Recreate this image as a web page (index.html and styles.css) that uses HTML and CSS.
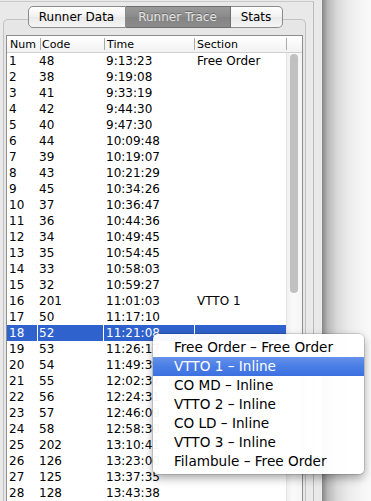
FILE: index.html
```html
<html>
<head>
<meta name="viewport" content="width=device-width, initial-scale=1">
<link rel="stylesheet" href="styles.css">
</head>

<body>
<div class="window">

  <div class="pane">
    <div class="frame">
      <div class="tabbox">

        <!-- Segmented tabs -->
        <div class="tabs">
          <div class="tab tab-first">Runner Data</div>
          <div class="tab tab-on">Runner Trace</div>
          <div class="tab tab-last">Stats</div>
        </div>

        <!-- Trace table -->
        <div class="table">
          <div class="thead">
            <div class="th th-num">Num</div>
            <div class="th th-code">Code</div>
            <div class="th th-time">Time</div>
            <div class="th th-sec">Section</div>
            <div class="th th-end"></div>
          </div>
          <div class="tbody">
            <div class="rows">
              <div class="row"><span>1</span><span>48</span><span>9:13:23</span><span>Free Order</span></div>
              <div class="row"><span>2</span><span>38</span><span>9:19:08</span><span></span></div>
              <div class="row"><span>3</span><span>41</span><span>9:33:19</span><span></span></div>
              <div class="row"><span>4</span><span>42</span><span>9:44:30</span><span></span></div>
              <div class="row"><span>5</span><span>40</span><span>9:47:30</span><span></span></div>
              <div class="row"><span>6</span><span>44</span><span>10:09:48</span><span></span></div>
              <div class="row"><span>7</span><span>39</span><span>10:19:07</span><span></span></div>
              <div class="row"><span>8</span><span>43</span><span>10:21:29</span><span></span></div>
              <div class="row"><span>9</span><span>45</span><span>10:34:26</span><span></span></div>
              <div class="row"><span>10</span><span>37</span><span>10:36:47</span><span></span></div>
              <div class="row"><span>11</span><span>36</span><span>10:44:36</span><span></span></div>
              <div class="row"><span>12</span><span>34</span><span>10:49:45</span><span></span></div>
              <div class="row"><span>13</span><span>35</span><span>10:54:45</span><span></span></div>
              <div class="row"><span>14</span><span>33</span><span>10:58:03</span><span></span></div>
              <div class="row"><span>15</span><span>32</span><span>10:59:27</span><span></span></div>
              <div class="row"><span>16</span><span>201</span><span>11:01:03</span><span>VTTO 1</span></div>
              <div class="row"><span>17</span><span>50</span><span>11:17:10</span><span></span></div>
              <div class="row sel"><span>18</span><span>52</span><span>11:21:08</span><span></span></div>
              <div class="row"><span>19</span><span>53</span><span>11:26:17</span><span></span></div>
              <div class="row"><span>20</span><span>54</span><span>11:49:39</span><span></span></div>
              <div class="row"><span>21</span><span>55</span><span>12:02:37</span><span></span></div>
              <div class="row"><span>22</span><span>56</span><span>12:24:31</span><span></span></div>
              <div class="row"><span>23</span><span>57</span><span>12:46:09</span><span></span></div>
              <div class="row"><span>24</span><span>58</span><span>12:58:30</span><span></span></div>
              <div class="row"><span>25</span><span>202</span><span>13:10:41</span><span></span></div>
              <div class="row"><span>26</span><span>126</span><span>13:23:00</span><span></span></div>
              <div class="row"><span>27</span><span>125</span><span>13:37:35</span><span></span></div>
              <div class="row"><span>28</span><span>128</span><span>13:43:38</span><span></span></div>
            </div>
            <div class="scroll"><div class="thumb"></div></div>
          </div>
        </div>

      </div>
    </div>
  </div>

  <div class="shade"></div>

  <!-- Section popup menu -->
  <div class="menu">
    <div class="item">Free Order – Free Order</div>
    <div class="item item-on">VTTO 1 – Inline</div>
    <div class="item">CO MD – Inline</div>
    <div class="item">VTTO 2 – Inline</div>
    <div class="item">CO LD – Inline</div>
    <div class="item">VTTO 3 – Inline</div>
    <div class="item">Filambule – Free Order</div>
  </div>

</div>
</body>
</html>
```

FILE: styles.css
```css
body {
    margin: 0;
    background: #e9e9e9;
    font-family: "DejaVu Sans", "Liberation Sans", sans-serif;
    color: #000;
    overflow: hidden;
}

.window {
    position: relative;
    display: flex;
    height: 501px;
    overflow: hidden;
}

.pane {
    width: 322px;
    flex: none;
    border-right: 1px solid #8a8a8a;
    background: #e9e9e9;
}

.frame {
    box-sizing: border-box;
    width: 314px;
    height: 520px;
    margin-top: 1px;
    border-top: 1px solid #c9c9c9;
    border-right: 1px solid #bcbcbc;
    padding: 0 7px 0 3px;
}

.tabbox {
    height: 520px;
    margin-top: 17px;
    padding: 0 2px;
    border: 1px solid #c2c2c2;
    border-bottom: none;
    border-radius: 5px 5px 0 0;
    background: #e6e6e6;
}

/* segmented control */
.tabs {
    position: relative;
    display: flex;
    justify-content: center;
    margin-top: -14px;
    padding-left: 1px;
}

.tab {
    box-sizing: border-box;
    height: 22px;
    line-height: 20px;
    font-size: 12px;
    text-align: center;
    border: 1px solid #8c8c8c;
    border-left: none;
    background: linear-gradient(#ffffff, #f1f1f1 50%, #e9e9e9 51%, #f5f5f5);
}

.tab-first {
    width: 98px;
    border-left: 1px solid #8c8c8c;
    border-radius: 5px 0 0 5px;
}

.tab-on {
    width: 105px;
    color: #e4e4e4;
    background: linear-gradient(#9a9a9a, #8a8a8a 50%, #838383 51%, #8c8c8c);
    border-color: #6e6e6e;
    text-shadow: 0 -1px 0 #6a6a6a;
}

.tab-last {
    width: 52px;
    border-radius: 0 5px 5px 0;
}

/* table */
.table {
    margin-top: 7px;
    height: 480px;
    border: 1px solid #8e8e8e;
    background: #fff;
}

.thead {
    display: flex;
    height: 16px;
    border-bottom: 1px solid #cfcfcf;
    background: linear-gradient(#ffffff, #f2f2f2);
    font-size: 11px;
}

.th {
    box-sizing: border-box;
    height: 12px;
    margin-top: 2px;
    line-height: 13px;
    padding-left: 2px;
    border-left: 1px solid #a9a9a9;
    white-space: nowrap;
}

.th-num {
    width: 33px;
    padding-left: 3px;
    border-left: none;
}

.th-code {
    width: 64px;
    padding-left: 1px;
}

.th-time {
    width: 90px;
}

.th-sec {
    width: 92px;
}

.th-end {
    flex: 1;
}

.tbody {
    display: flex;
}

.rows {
    width: 279px;
}

.row {
    display: grid;
    grid-template-columns: 30px 65px 90px 91px;
    column-gap: 1px;
    height: 16px;
    font-size: 12px;
}

.row span {
    box-sizing: border-box;
    padding: 1px 0 0 2px;
    line-height: 15px;
    white-space: nowrap;
}

.row span:nth-child(2) {
    padding-left: 1px;
}

.row.sel span {
    background: #2f62cc;
    color: #fff;
}

.scroll {
    width: 15px;
    height: 460px;
    border-left: 1px solid #e6e6e6;
    background: linear-gradient(to right, #f0f0f0, #fafafa 40%, #f4f4f4);
}

.thumb {
    width: 8px;
    height: 239px;
    margin: 1px 0 0 3px;
    border-radius: 4px;
    background: #c1c1c1;
}

/* window shadow on the right */
.shade {
    flex: 1;
    background: linear-gradient(to right, #8f8f8f 0, #b9b9b9 5px, #d9d9d9 14px, #ececec 26px, #f6f6f6 40px, #f9f9f9 48px);
}

/* popup menu */
.menu {
    position: absolute;
    left: 153px;
    top: 334px;
    width: 211px;
    padding: 4px 0 3px;
    border-radius: 5px;
    background: rgba(255, 255, 255, 0.96);
    box-shadow: 0 0 0 1px rgba(0, 0, 0, 0.12), 0 4px 10px rgba(0, 0, 0, 0.35);
}

.item {
    height: 19px;
    line-height: 19px;
    padding-left: 21px;
    font-size: 13.6px;
    white-space: nowrap;
}

.item-on {
    color: #fff;
    background: linear-gradient(#6592ea, #4a7ee6 50%, #3c70e1);
}
```
